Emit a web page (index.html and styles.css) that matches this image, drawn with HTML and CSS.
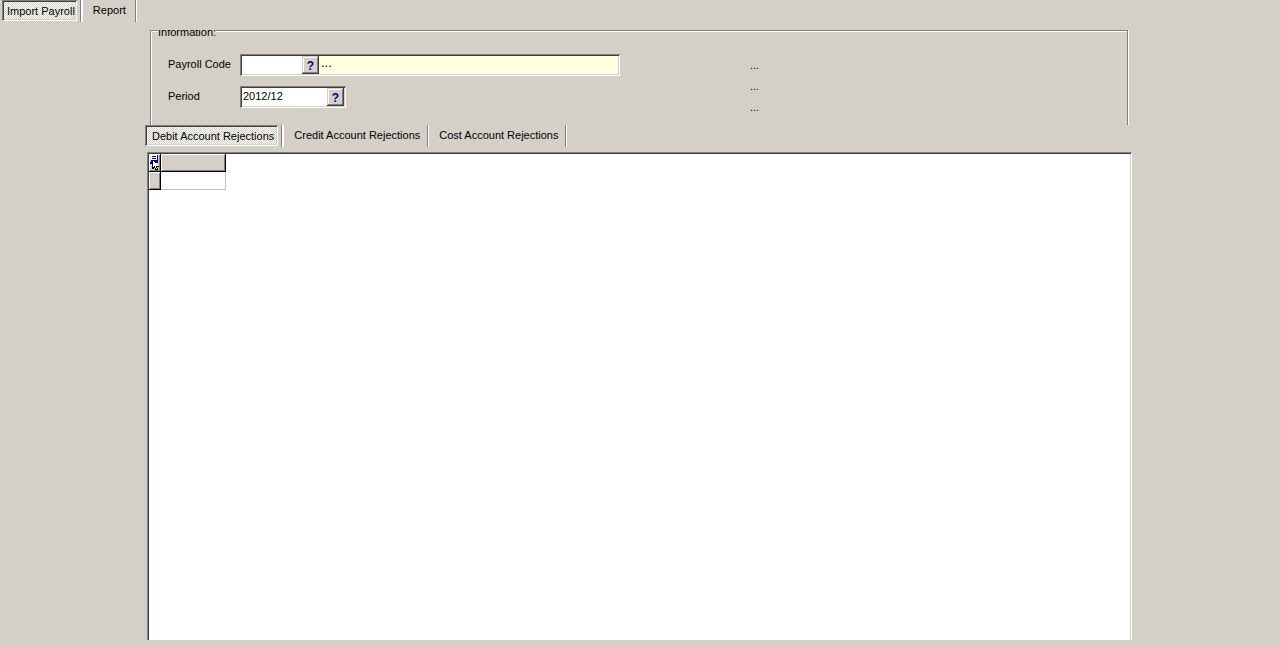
FILE: index.html
```html
<!DOCTYPE html>
<html lang="en">
<head>
<meta charset="utf-8">
<title>Import Payroll</title>
<link rel="stylesheet" href="styles.css">
</head>
<body>
<nav class="tabs tabs-main">
  <button class="tab active" type="button">Import Payroll</button>
  <button class="tab" type="button">Report</button>
</nav>
<main class="panel">
  <section class="group" aria-labelledby="info-title">
    <h2 class="group-title" id="info-title">Information:</h2>
    <div class="fields">
      <div class="row">
        <label for="code">Payroll Code</label>
        <div class="box box-code">
          <input id="code" type="text">
          <button class="lookup" type="button">?</button>
          <output class="description" for="code">...</output>
        </div>
      </div>
      <div class="row">
        <label for="period">Period</label>
        <div class="box box-period">
          <input id="period" type="text" value="2012/12">
          <button class="lookup" type="button">?</button>
        </div>
      </div>
    </div>
    <div class="status">
      <span>...</span>
      <span>...</span>
      <span>...</span>
    </div>
  </section>
  <nav class="tabs">
    <button class="tab active" type="button">Debit Account Rejections</button>
    <button class="tab" type="button">Credit Account Rejections</button>
    <button class="tab" type="button">Cost Account Rejections</button>
  </nav>
  <div class="sheet">
    <table class="grid">
      <tr>
        <th class="corner">
          <svg width="11" height="17" viewBox="0 0 11 17" shape-rendering="crispEdges" aria-hidden="true">
            <path fill="#fff" d="M2 1h6v9H2z"/>
            <path fill="#000080" d="M3 2h4v1H3zM3 4h4v1H3zM2 6h7v3H2zM1 8h2v2H1zM8 1h1v6H8z"/>
            <path fill="#000" d="M3 6h1v1h1v1h1v1h1v1h1v1h1v1h1v1H8v1h1v2H6v-2H5v1H3z"/>
            <path fill="#fff" d="M4 7h1v1h1v1h1v1h1v1h1v1H7v2h1v1H7v-1H6v-2H5v1H4z"/>
          </svg>
        </th>
        <th class="head"></th>
      </tr>
      <tr>
        <th class="side"></th>
        <td class="cell"></td>
      </tr>
    </table>
  </div>
</main>
</body>
</html>
```
FILE: styles.css
```css
* {
  box-sizing: border-box;
}

body {
  margin: 0;
  min-height: 100vh;
  display: flex;
  flex-direction: column;
  background: #d4d0c8;
  color: #000;
  font: 11px/14px "Liberation Sans", Arial, sans-serif;
}

button,
input {
  margin: 0;
  padding: 0;
  border: 0;
  border-radius: 0;
  color: inherit;
  font: inherit;
}

.tabs {
  display: flex;
  height: 22px;
}

.tabs-main {
  padding-left: 2px;
}

.tab {
  height: 22px;
  padding: 0 8px 2px 10px;
  border-right: 1px solid #fff;
  background: none;
  box-shadow: inset -1px 0 #808080;
  white-space: nowrap;
}

.tab.active {
  position: relative;
  height: 21px;
  margin-right: 6px;
  padding: 1px 4px 0 7px;
  border-right: 0;
  background: repeating-conic-gradient(#fff 0 25%, #d4d0c8 0 50%) 0 0 / 2px 2px;
  box-shadow: inset 1px 1px #808080, inset -1px -1px #fff, inset 2px 2px #404040, inset -2px -2px #d4d0c8;
}

.tabs-main .tab {
  padding-right: 10px;
}

.tabs-main .tab.active {
  padding-right: 2px;
  padding-left: 5px;
}

.tab.active::after {
  content: "";
  position: absolute;
  top: 0;
  right: -6px;
  width: 2px;
  height: 22px;
  border-left: 1px solid #808080;
  background: #fff;
}

.panel {
  flex: 1;
  display: flex;
  flex-direction: column;
  padding: 8px 148px 7px 145px;
}

.group {
  position: relative;
  display: flex;
  height: 95px;
  margin: 0 4px 0 5px;
  padding: 23px 16px 0 17px;
  border: 1px solid #808080;
  border-bottom: 0;
  box-shadow: inset 1px 1px #fff, 1px 0 #fff;
}

.group-title {
  position: absolute;
  top: -1px;
  left: 7px;
  display: flex;
  align-items: flex-end;
  height: 9px;
  margin: 0;
  overflow: hidden;
  background: #d4d0c8;
  font: inherit;
}

.fields {
  display: flex;
  flex-direction: column;
  gap: 10px;
  width: 582px;
}

.row {
  display: flex;
  height: 22px;
}

.row label {
  width: 72px;
  padding-top: 3px;
}

.box {
  display: flex;
  padding: 2px;
  background: #fff;
  box-shadow: inset 1px 1px #808080, inset -1px -1px #fff, inset 2px 2px #404040, inset -2px -2px #d4d0c8;
}

.box-code {
  width: 380px;
}

.box-period {
  width: 106px;
}

.box input {
  width: 60px;
  padding: 0 0 2px 1px;
  background: #fff;
}

.box-period input {
  width: 85px;
}

.lookup {
  width: 17px;
  padding-top: 2px;
  background: #d4d0c8;
  box-shadow: inset -1px -1px #404040, inset 1px 1px #d4d0c8, inset -2px -2px #808080, inset 2px 2px #fff;
  color: #000080;
  font-size: 12px;
  font-weight: bold;
}

.description {
  flex: 1;
  padding-left: 2px;
  background: #ffffe1;
  font-size: 13px;
}

.status {
  display: flex;
  flex-direction: column;
  gap: 7px;
  padding-top: 4px;
}

.sheet {
  flex: 1;
  margin: 5px 0 0 2px;
  padding: 1px;
  background: #fff;
  border: 1px solid #808080;
  border-right-color: #fff;
  border-bottom: 0;
  box-shadow: inset 1px 1px #404040, inset -1px 0 #d4d0c8;
}

.grid {
  border-collapse: separate;
  border-spacing: 0;
  table-layout: fixed;
  width: 77px;
}

.grid th,
.grid td {
  height: 18px;
  padding: 0;
}

.corner,
.head,
.side {
  background: #d4d0c8;
  border-right: 1px solid #000;
  border-bottom: 1px solid #000;
  box-shadow: inset 1px 1px #fff, inset -1px -1px #808080;
}

.corner {
  width: 12px;
}

.corner svg {
  display: block;
}

.cell {
  border-right: 1px solid #c0c0c0;
  border-bottom: 1px solid #c0c0c0;
}
```
